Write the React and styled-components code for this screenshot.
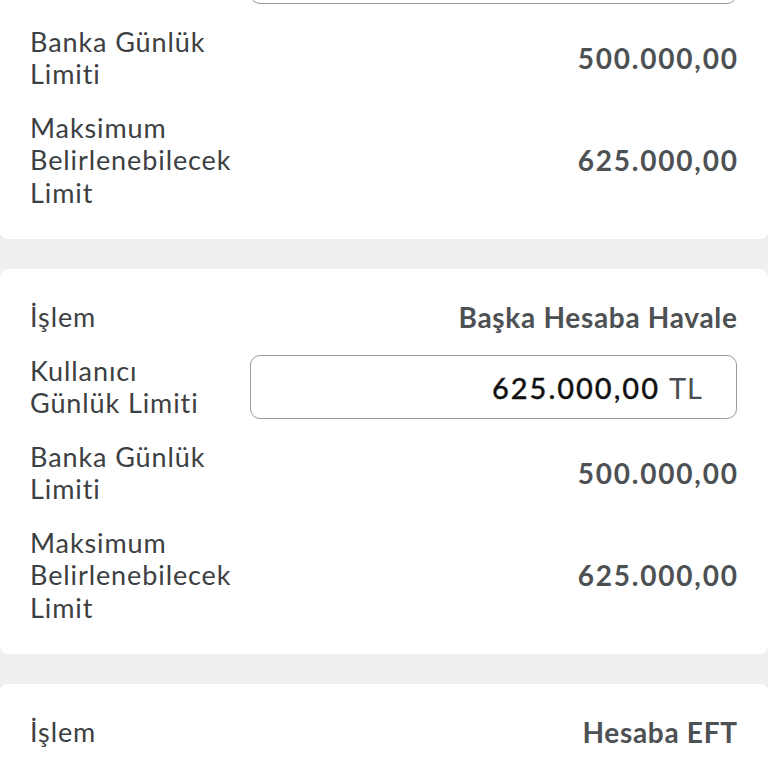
import React from 'react'
import styled, { createGlobalStyle } from 'styled-components'

const GlobalStyle = createGlobalStyle`
  html, body {
    margin: 0;
    padding: 0;
    background: #efefef;
    overflow: hidden;
  }
  body {
    font-family: Lato, "Open Sans", sans-serif;
    -webkit-font-smoothing: antialiased;
  }
`

const limits = [
  { islem: 'Başka Hesaba Havale', user: '625.000,00', bank: '500.000,00', max: '625.000,00' },
  { islem: 'Başka Hesaba Havale', user: '625.000,00', bank: '500.000,00', max: '625.000,00' },
  { islem: 'Hesaba EFT', user: '625.000,00', bank: '500.000,00', max: '625.000,00' },
]

const LimitCard = ({ item }) => {
  return (
    <Card>
      <Row>
        <Label>İşlem</Label>
        <Value>{item.islem}</Value>
      </Row>
      <Row>
        <Label>Kullanıcı<br />Günlük Limiti</Label>
        <AmountBox>
          <Amount>{item.user}</Amount>
          <Currency>TL</Currency>
        </AmountBox>
      </Row>
      <Row>
        <Label>Banka Günlük<br />Limiti</Label>
        <Value $numeric>{item.bank}</Value>
      </Row>
      <Row>
        <Label>Maksimum<br />Belirlenebilecek<br />Limit</Label>
        <Value $numeric>{item.max}</Value>
      </Row>
    </Card>
  )
}

const App = () => {
  return (
    <>
      <GlobalStyle />
      <Page>
        {limits.map((item, index) => (
          <LimitCard key={index} item={item} />
        ))}
      </Page>
    </>
  )
}

const Page = styled.div`
  display: flex;
  flex-direction: column;
  gap: 30px;
  margin-top: -146px;
`

const Card = styled.section`
  background: #ffffff;
  border-radius: 8px;
  padding: 32px 31px 30px 30px;
  display: flex;
  flex-direction: column;
  gap: 21px;
`

const Row = styled.div`
  display: flex;
  align-items: center;
  justify-content: space-between;
  gap: 16px;
`

const Label = styled.div`
  font-size: 27px;
  line-height: 32.5px;
  color: #3d4042;
  font-weight: 400;
  letter-spacing: 0.9px;
  white-space: nowrap;
`

const Value = styled.div`
  font-size: 28px;
  line-height: 32.5px;
  font-weight: 700;
  letter-spacing: ${p => (p.$numeric ? '1.8px' : '0.7px')};
  margin-right: ${p => (p.$numeric ? '-1.8px' : '-0.7px')};
  color: #4d5154;
  text-align: right;
`

const AmountBox = styled.div`
  width: 487px;
  height: 64px;
  box-sizing: border-box;
  border: 1.5px solid #9a9a9a;
  border-radius: 10px;
  display: flex;
  align-items: center;
  justify-content: flex-end;
  padding-right: 33px;
  gap: 11px;
`

const Amount = styled.span`
  font-size: 29px;
  font-weight: 500;
  letter-spacing: 2px;
  margin-right: -2px;
  color: #111111;
  -webkit-text-stroke: 0.3px #111111;
`

const Currency = styled.span`
  font-size: 29px;
  font-weight: 400;
  letter-spacing: 1px;
  color: #4a4e51;
`

export default App
